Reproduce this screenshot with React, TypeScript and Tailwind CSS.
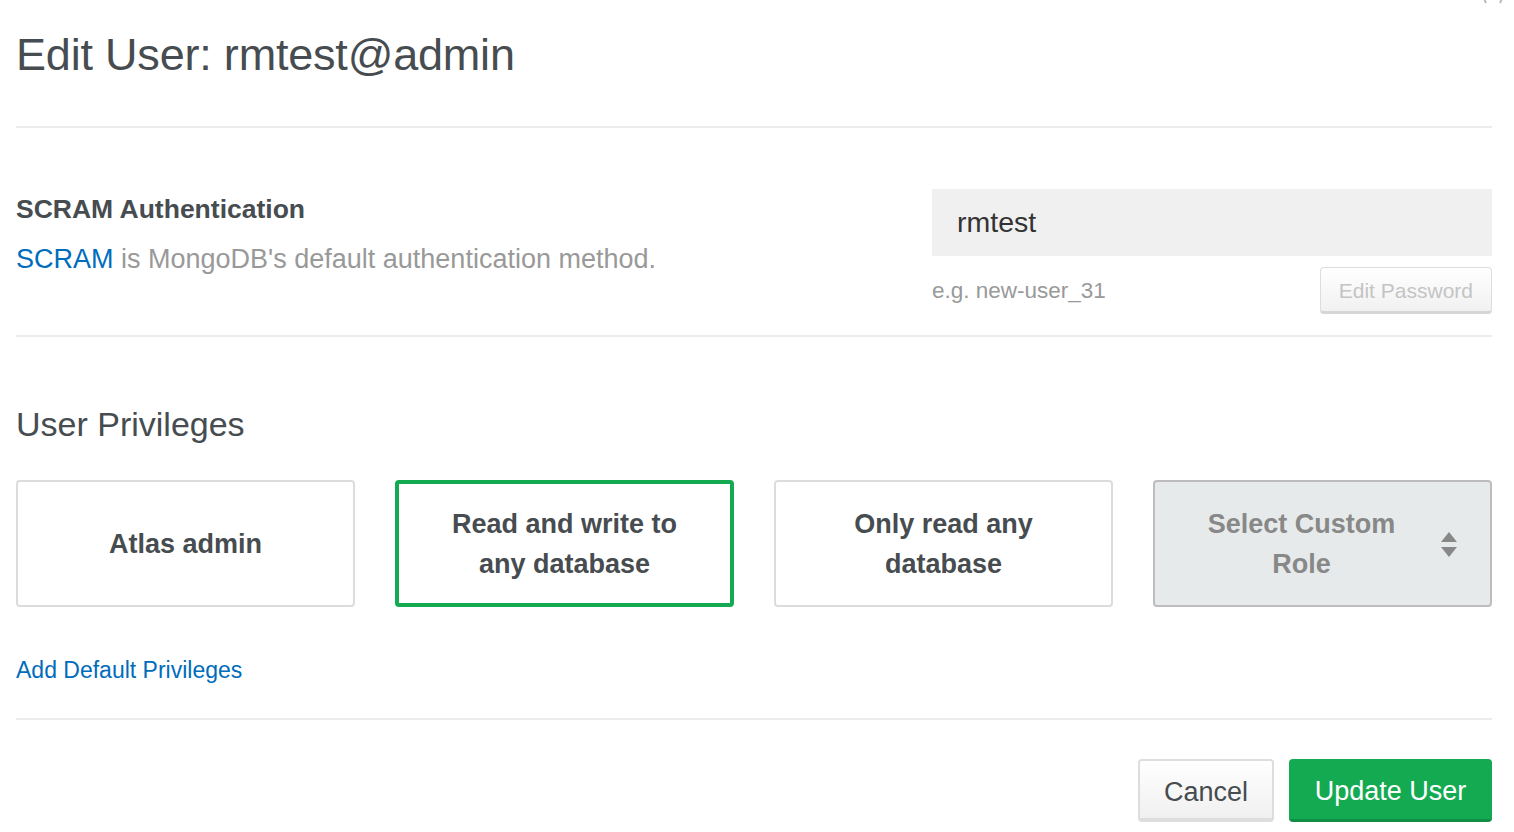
import React from 'react'

const cards = [
  { label: 'Atlas admin', selected: false },
  { label: 'Read and write to any database', selected: true },
  { label: 'Only read any database', selected: false },
]

export default function App() {
  return (
    <div className="relative min-h-screen bg-white pl-4 pr-[22px] font-['Liberation_Sans',Arial,sans-serif] text-[#464c4f]">
      {/* cut-off close icon */}
      <svg className="absolute top-0 right-[8px]" width="26" height="4" viewBox="0 0 26 4">
        <path d="M2 -6 L6 3 M24 -6 L20 3" stroke="#bbb" strokeWidth="2" />
      </svg>

      {/* Header */}
      <h1 className="pt-[26px] pb-[42px] text-[45px] leading-[58px] font-light tracking-[-0.2px]">
        Edit User: rmtest@admin
      </h1>
      <div className="h-[2px] bg-[#ececec]" />

      {/* Authentication */}
      <div className="flex justify-between pt-[61px] pb-[21px]">
        <div className="pt-[4px]">
          <div className="text-[26.5px] leading-[32px] font-bold">SCRAM Authentication</div>
          <div className="mt-[18px] text-[27px] leading-[32px] text-[#999]">
            <a className="text-[#006cbc]">SCRAM</a> is MongoDB's default authentication method.
          </div>
        </div>
        <div className="w-[560px]">
          <div className="flex h-[67px] items-center bg-[#f0f0f0] px-[25px] text-[28.5px] text-[#333]">rmtest</div>
          <div className="mt-[11px] flex items-start justify-between">
            <span className="pt-[11px] text-[22.5px] leading-[26px] text-[#999]">e.g. new-user_31</span>
            <button className="h-[47px] rounded-[4px] border border-[#ddd] border-b-[3px] border-b-[#d6d6d6] bg-gradient-to-b from-white to-[#f1f1f1] px-[18px] pt-[3px] text-[21px] text-[#c4c4c4]">
              Edit Password
            </button>
          </div>
        </div>
      </div>
      <div className="h-[2px] bg-[#ececec]" />

      {/* Privileges */}
      <h2 className="pt-[66px] pb-[35px] text-[34px] leading-[42px] font-light">User Privileges</h2>
      <div className="grid grid-cols-4 gap-[40px]">
        {cards.map(c => (
          <div
            key={c.label}
            className={
              c.selected
                ? 'flex h-[127px] items-center justify-center rounded-[4px] border-[4px] border-[#13aa52] px-12 text-center text-[27px] leading-[40px] font-bold'
                : 'flex h-[127px] items-center justify-center rounded-[4px] border-2 border-[#dcdcdc] px-12 text-center text-[27px] leading-[40px] font-bold'
            }
          >
            {c.label}
          </div>
        ))}
        <div className="relative flex h-[127px] items-center justify-center rounded-[4px] border-2 border-[#bdbdbd] bg-[#e7eaea] pl-12 pr-[90px] text-center text-[27px] leading-[40px] font-bold text-[#888]">
          Select Custom Role
          <svg className="absolute right-[32px] top-[50px]" width="18" height="26" viewBox="0 0 18 26">
            <path d="M9 0 L17 10 L1 10 Z" fill="#888" />
            <path d="M1 15 L17 15 L9 25 Z" fill="#888" />
          </svg>
        </div>
      </div>

      <div className="pt-[49px] pb-[33px]">
        <a className="text-[23px] leading-[28px] text-[#006cbc]">Add Default Privileges</a>
      </div>
      <div className="h-[2px] bg-[#ececec]" />

      {/* Footer */}
      <div className="flex justify-end gap-[15px] pt-[39px]">
        <button className="h-[63px] w-[136px] rounded-[4px] border-2 border-[#ddd] border-b-[4px] bg-gradient-to-b from-white to-[#f0f0f0] pt-[5px] text-[27px] text-[#464c4f]">
          Cancel
        </button>
        <button className="h-[63px] w-[203px] rounded-[4px] border-b-[3px] border-[#118e45] bg-[#13aa52] pt-[5px] text-[27px] text-white">
          Update User
        </button>
      </div>
    </div>
  )
}
